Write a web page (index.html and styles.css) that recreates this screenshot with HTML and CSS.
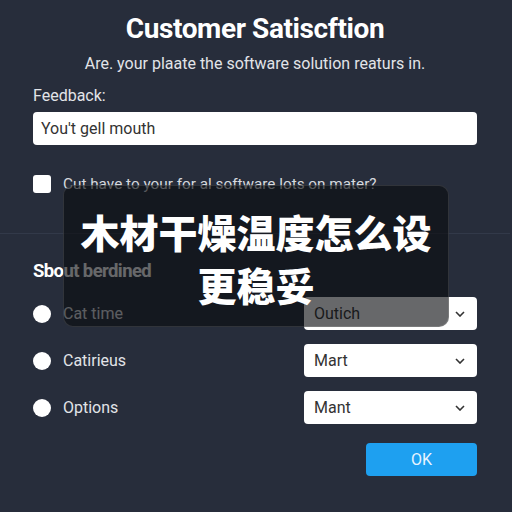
FILE: index.html
```html
<!DOCTYPE html>
<html lang="en">
<head>
    <meta charset="UTF-8">
    <meta name="viewport" content="width=device-width, initial-scale=1.0">
    <title>Customer Satisfaction</title>
    <link rel="stylesheet" href="styles.css">
</head>
<body>
    <div class="survey">
        <h1>Customer Satiscftion</h1>
        <p class="subtitle">Are. your plaate the software solution reaturs in.</p>

        <label class="field-label" for="feedback">Feedback:</label>
        <div class="text-input" id="feedback">You't gell mouth</div>

        <div class="check-row">
            <span class="checkbox"></span>
            <span class="check-text">Cut have to your for al software lots on mater?</span>
        </div>

        <hr class="divider">

        <h2>Sbout berdined</h2>

        <div class="option-row">
            <span class="radio"></span>
            <span class="option-label">Cat time</span>
            <div class="select">Outich
                <svg width="10" height="6" viewBox="0 0 10 6"><path d="M1 1l4 4 4-4" fill="none" stroke="#333" stroke-width="1.6"/></svg>
            </div>
        </div>
        <div class="option-row">
            <span class="radio"></span>
            <span class="option-label">Catirieus</span>
            <div class="select">Mart
                <svg width="10" height="6" viewBox="0 0 10 6"><path d="M1 1l4 4 4-4" fill="none" stroke="#333" stroke-width="1.6"/></svg>
            </div>
        </div>
        <div class="option-row">
            <span class="radio"></span>
            <span class="option-label">Options</span>
            <div class="select">Mant
                <svg width="10" height="6" viewBox="0 0 10 6"><path d="M1 1l4 4 4-4" fill="none" stroke="#333" stroke-width="1.6"/></svg>
            </div>
        </div>

        <div class="actions">
            <button class="ok-btn">OK</button>
        </div>
    </div>

    <!-- caption overlay -->
    <div class="caption">木材干燥温度怎么设<br>更稳妥</div>
</body>
</html>
```

FILE: styles.css
```css
body {
    margin: 0;
    width: 512px;
    height: 512px;
    overflow: hidden;
    background-color: #272d3b;
    font-family: Roboto, "Liberation Sans", sans-serif;
    color: #e6e8ec;
    position: relative;
}
.survey {
    display: flex;
    flex-direction: column;
    padding: 11px 35px 0 33px;
}
h1 {
    margin: 0;
    text-align: center;
    font-size: 28px;
    font-weight: 700;
    line-height: 36px;
    color: #ffffff;
    letter-spacing: -0.4px;
}
.subtitle {
    margin: 7px 0 0;
    text-align: center;
    font-size: 16px;
    line-height: 20px;
    color: #e2e4e8;
}
.field-label {
    margin-top: 12px;
    font-size: 16px;
    line-height: 20px;
    color: #e2e4e8;
}
.text-input {
    margin-top: 6px;
    height: 33px;
    box-sizing: border-box;
    padding: 0 8px;
    display: flex;
    align-items: center;
    background: #ffffff;
    border-radius: 4px;
    font-size: 16px;
    color: #333;
}
.check-row {
    display: flex;
    align-items: center;
    gap: 12px;
    margin-top: 30px;
}
.checkbox {
    width: 18px;
    height: 18px;
    background: #ffffff;
    border-radius: 3px;
}
.check-text {
    font-size: 15.3px;
    color: #d6d9de;
}
.divider {
    margin: 40px -33px 0 -33px;
    border: none;
    border-top: 1px solid #323949;
}
h2 {
    margin: 26px 0 0;
    font-size: 18.5px;
    font-weight: 700;
    line-height: 23px;
    color: #ffffff;
    letter-spacing: -0.6px;
}
.option-row {
    display: flex;
    align-items: center;
    height: 33px;
    margin-top: 14px;
}
.option-row:first-of-type {
    margin-top: 10px;
}
.radio {
    width: 18px;
    height: 18px;
    border-radius: 50%;
    background: #ffffff;
}
.option-label {
    margin-left: 12px;
    flex: 1;
    font-size: 16px;
    color: #e2e4e8;
}
.select {
    width: 173px;
    height: 33px;
    box-sizing: border-box;
    padding: 0 12px 0 10px;
    display: flex;
    align-items: center;
    justify-content: space-between;
    background: #ffffff;
    border-radius: 4px;
    font-size: 16px;
    color: #333;
}
.actions {
    display: flex;
    justify-content: flex-end;
    margin-top: 19px;
}
.ok-btn {
    width: 111px;
    height: 33px;
    border: none;
    border-radius: 4px;
    background-color: #1ea0f0;
    color: #e8f4ff;
    font-family: Roboto, "Liberation Sans", sans-serif;
    font-size: 16px;
}
.caption {
    position: absolute;
    left: 63px;
    top: 185px;
    width: 386px;
    height: 142px;
    box-sizing: border-box;
    padding-top: 19px;
    border-radius: 10px;
    border: 1px solid rgba(255, 255, 255, 0.12);
    background: rgba(10, 11, 14, 0.62);
    text-align: center;
    font-family: "Noto Sans CJK SC", sans-serif;
    font-size: 39px;
    font-weight: 900;
    line-height: 53px;
    color: #ffffff;
}
```
